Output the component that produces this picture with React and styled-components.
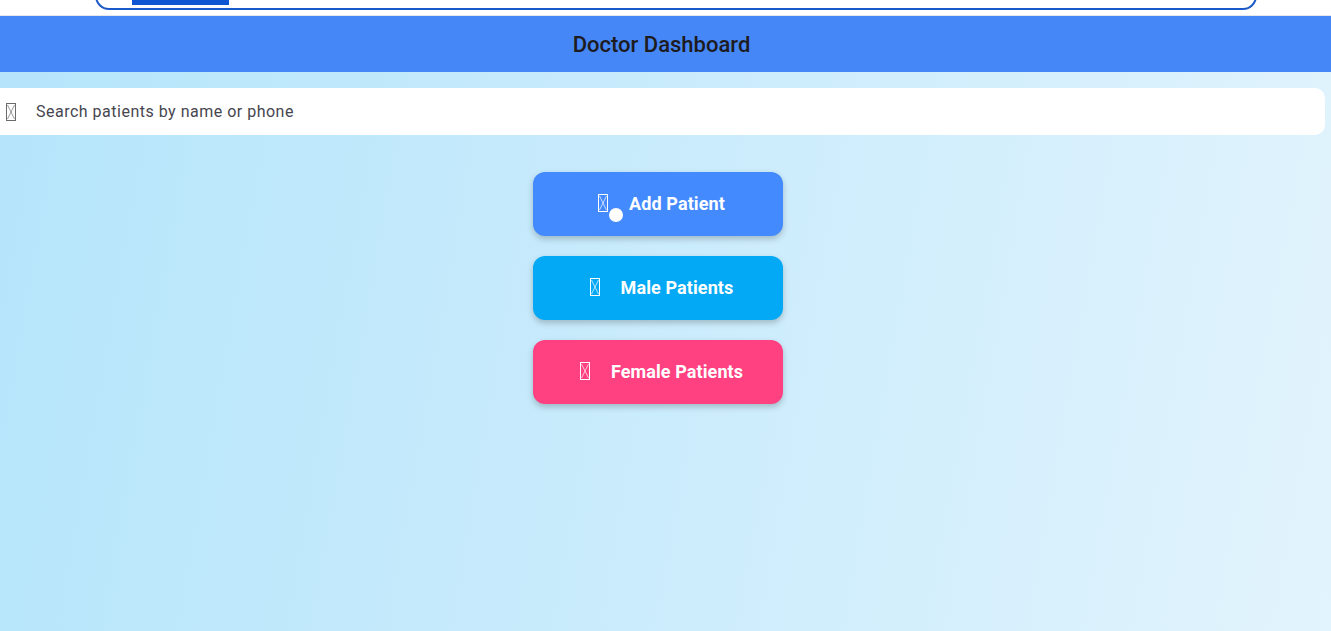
import styled, { createGlobalStyle } from 'styled-components';

const Global = createGlobalStyle`
  html, body {
    margin: 0;
    padding: 0;
    overflow: hidden;
  }
  body {
    font-family: Roboto, "Noto Sans", sans-serif;
  }
`;

const Page = styled.div`
  width: 1331px;
  height: 631px;
  display: flex;
  flex-direction: column;
  background: linear-gradient(100deg, #b5e5fb 0%, #c8ebfc 45%, #e2f4fd 100%);
  overflow: hidden;
`;

const TopStrip = styled.div`
  height: 15px;
  background: #ffffff;
  border-bottom: 1px solid #e4e7ec;
  padding: 0 74px 0 95px;
  overflow: hidden;
`;

const BrowserBox = styled.div`
  height: 30px;
  margin-top: -20px;
  border: 2px solid #1b58c9;
  border-radius: 14px;
  box-sizing: border-box;
  padding-left: 35px;
  display: flex;
  align-items: flex-start;
`;

const TabBar = styled.div`
  width: 97px;
  height: 23px;
  background: #0f57d2;
`;

const Header = styled.header`
  height: 56px;
  background: #4687f7;
  display: flex;
  align-items: center;
  justify-content: center;
  font-size: 22px;
  font-weight: 500;
  color: #1d1b20;
  padding-right: 8px;
`;

const SearchBar = styled.div`
  margin: 16px 6px 0 -12px;
  height: 47px;
  background: #ffffff;
  border-radius: 10px;
  display: flex;
  align-items: center;
  padding-left: 18px;
  gap: 20px;
  font-size: 16px;
  color: #46464f;
  letter-spacing: 0.5px;
`;

const IconWrap = styled.span`
  position: relative;
  display: inline-flex;
  flex-shrink: 0;
`;

const Actions = styled.div`
  display: flex;
  flex-direction: column;
  align-items: center;
  gap: 20px;
  margin-top: 37px;
  padding-right: 16px;
`;

const ActionButton = styled.button`
  width: 250px;
  height: 64px;
  border: none;
  border-radius: 12px;
  background: ${(p) => p.bg};
  color: #ffffff;
  font-family: Roboto, sans-serif;
  font-weight: 700;
  font-size: 18px;
  letter-spacing: 0.1px;
  display: flex;
  align-items: center;
  justify-content: center;
  gap: 21px;
  box-shadow: 0 3px 6px rgba(0, 0, 0, 0.22);
  padding: 0 0 2px 8px;
`;

const Dot = styled.span`
  position: absolute;
  width: 14px;
  height: 14px;
  border-radius: 50%;
  background: #ffffff;
  left: 11px;
  top: 14px;
`;

// missing-glyph box, as the icon font shows it
const Tofu = ({ color }) => (
  <svg width="10" height="18" viewBox="0 0 10 18" fill="none" stroke={color} strokeWidth="1">
    <rect x="0.5" y="0.5" width="9" height="17" />
    <path d="M1.5 2 L8.5 16 M8.5 2 L1.5 16" strokeWidth="0.7" />
  </svg>
);

const buttons = [
  { label: 'Add Patient', bg: '#448aff', dot: true },
  { label: 'Male Patients', bg: '#03a9f4' },
  { label: 'Female Patients', bg: '#ff4081' },
];

const App = () => (
  <Page>
    <Global />
    <TopStrip>
      <BrowserBox>
        <TabBar />
      </BrowserBox>
    </TopStrip>
    <Header>Doctor Dashboard</Header>
    <SearchBar>
      <IconWrap>
        <Tofu color="#6b6b6b" />
      </IconWrap>
      <span>Search patients by name or phone</span>
    </SearchBar>
    <Actions>
      {buttons.map((b) => (
        <ActionButton key={b.label} bg={b.bg}>
          <IconWrap>
            <Tofu color="#ffffff" />
            {b.dot && <Dot />}
          </IconWrap>
          <span>{b.label}</span>
        </ActionButton>
      ))}
    </Actions>
  </Page>
);

export default App;
